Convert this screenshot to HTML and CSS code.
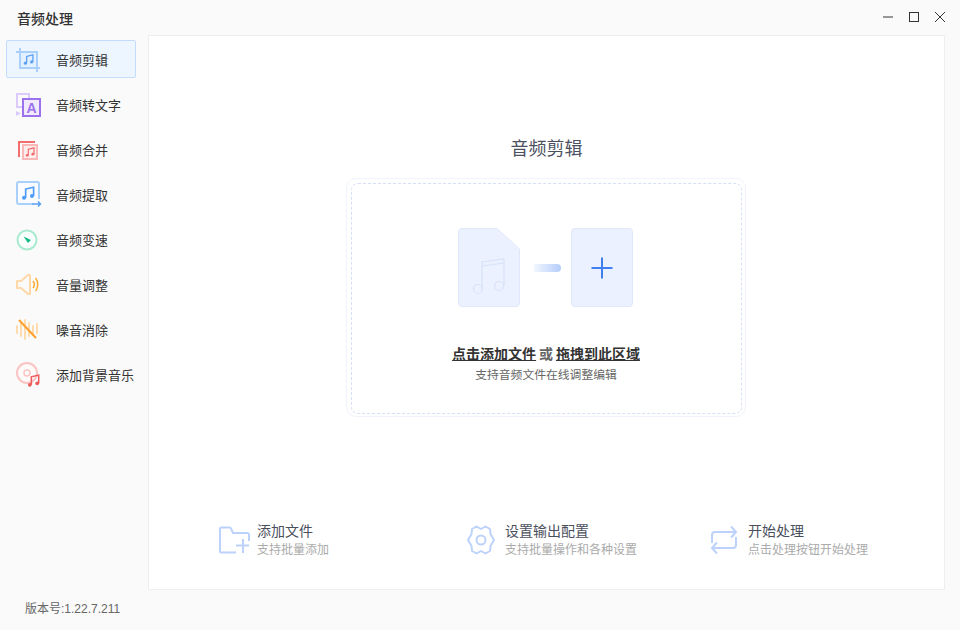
FILE: index.html
```html
<!DOCTYPE html>
<html>
<head>
    <title>音频处理</title>
    <link rel="stylesheet" href="styles.css">
</head>
<body>
    <svg class="defs" width="0" height="0">
        <symbol id="note" viewBox="0 0 12 12">
            <path d="M4 10V2.600L10.800 1v7.600" fill="none" stroke="currentColor" stroke-width="1.400"/>
            <circle cx="2.600" cy="10" r="1.700" fill="currentColor"/>
            <circle cx="9.400" cy="8.600" r="1.700" fill="currentColor"/>
        </symbol>
    </svg>

    <div class="titlebar">
        <span class="app-title">音频处理</span>
        <div class="win-buttons">
            <svg width="12" height="12" viewBox="0 0 12 12"><path d="M1 6h10" stroke="#333" fill="none"/></svg>
            <svg width="12" height="12" viewBox="0 0 12 12"><rect x="1.500" y="1.500" width="9" height="9" stroke="#333" fill="none"/></svg>
            <svg width="12" height="12" viewBox="0 0 12 12"><path d="M1 1l10 10M11 1L1 11" stroke="#333" fill="none"/></svg>
        </div>
    </div>

    <div class="main">
        <div class="sidebar">
            <div class="nav-item active">
                <svg class="nav-icon" viewBox="0 0 28 28">
                    <rect x="6" y="7" width="17" height="16" fill="#e3f0ff"/>
                    <path d="M6 3v20h20M2 7h21v20" fill="none" stroke="#a9d0fb" stroke-width="2"/>
                    <use href="#note" x="9" y="9" width="11" height="11" color="#5aa0f5"/>
                </svg>
                <span>音频剪辑</span>
            </div>
            <div class="nav-item">
                <svg class="nav-icon" viewBox="0 0 28 28">
                    <path d="M8 17H3V4h12v4" fill="none" stroke="#dccbfa" stroke-width="2"/>
                    <path d="M2 21l5 2.500L2 26z" fill="#dccbfa"/>
                    <rect x="9" y="9" width="17" height="17" fill="#f1eafe" stroke="#9b72ec" stroke-width="2"/>
                    <text x="17.500" y="23" class="icon-letter">A</text>
                </svg>
                <span>音频转文字</span>
            </div>
            <div class="nav-item">
                <svg class="nav-icon" viewBox="0 0 28 28">
                    <path d="M5 22V7h16" fill="none" stroke="#f26d6d" stroke-width="2"/>
                    <rect x="9" y="10" width="14" height="14" fill="#ffecec" stroke="#fbb8b8" stroke-width="2"/>
                    <use href="#note" x="11" y="12" width="10" height="10" color="#f06a6a"/>
                </svg>
                <span>音频合并</span>
            </div>
            <div class="nav-item">
                <svg class="nav-icon" viewBox="0 0 28 28">
                    <path d="M19 24H5a2 2 0 0 1-2-2V4a2 2 0 0 1 2-2h18a2 2 0 0 1 2 2v15" fill="#fafcff" stroke="#a9d0fb" stroke-width="2"/>
                    <use href="#note" x="7" y="6" width="14" height="14" color="#4d9bf7"/>
                    <path d="M18 24h8M24 21.500l2.500 2.500-2.500 2.500" fill="none" stroke="#5aa0f5" stroke-width="1.500"/>
                </svg>
                <span>音频提取</span>
            </div>
            <div class="nav-item">
                <svg class="nav-icon" viewBox="0 0 28 28">
                    <circle cx="13" cy="15" r="9.500" fill="#fbfffd" stroke="#a8ead0" stroke-width="2"/>
                    <path d="M9.500 11.500l7.500 3.500-3 3z" fill="#12b886"/>
                </svg>
                <span>音频变速</span>
            </div>
            <div class="nav-item">
                <svg class="nav-icon" viewBox="0 0 28 28">
                    <path d="M3 11h4l7-6h2v19h-2l-7-6H3z" fill="none" stroke="#ffd8a8" stroke-width="2" stroke-linejoin="round"/>
                    <path d="M19 11c1.500 2 1.500 5 0 7M21.500 8c3 3.500 3 9.500 0 13" fill="none" stroke="#ffaa33" stroke-width="1.500"/>
                </svg>
                <span>音量调整</span>
            </div>
            <div class="nav-item">
                <svg class="nav-icon" viewBox="0 0 28 28">
                    <path d="M3 11v7M7 8v13M11 5v19M15 8v13M19 11v9M23 9v9" fill="none" stroke="#ffdcae" stroke-width="2" stroke-linecap="round"/>
                    <path d="M5 5l17 18" fill="none" stroke="#ff9f2e" stroke-width="2"/>
                </svg>
                <span>噪音消除</span>
            </div>
            <div class="nav-item">
                <svg class="nav-icon" viewBox="0 0 28 28">
                    <circle cx="13" cy="13" r="10" fill="#fffafa" stroke="#f9c4c4" stroke-width="2"/>
                    <circle cx="13" cy="13" r="3" fill="none" stroke="#f9c4c4" stroke-width="1.500"/>
                    <use href="#note" x="13" y="14" width="13" height="13" color="#ee5a5a"/>
                </svg>
                <span>添加背景音乐</span>
            </div>
        </div>

        <div class="panel">
            <h2 class="panel-title">音频剪辑</h2>
            <div class="drop-outer">
                <div class="drop-inner">
                    <div class="drop-icons">
                        <svg class="file-icon" width="62" height="79" viewBox="0 0 62 79">
                            <path d="M4 .5h35L61.500 21v54a3.500 3.500 0 0 1-3.500 3.500H4A3.500 3.500 0 0 1 .5 75V4A3.500 3.500 0 0 1 4 .5z" fill="#ebf1fe" stroke="#dfe8fb"/>
                            <path d="M24 61V34l22-3v27M24 38l22-3" fill="none" stroke="#d7e2f8" stroke-width="1.200"/>
                            <circle cx="20" cy="61" r="4.500" fill="none" stroke="#d7e2f8" stroke-width="1.200"/>
                            <circle cx="41" cy="58" r="4.500" fill="none" stroke="#d7e2f8" stroke-width="1.200"/>
                        </svg>
                        <span class="dash"></span>
                        <div class="plus-box">
                            <svg width="22" height="22" viewBox="0 0 22 22"><path d="M11 .5v21M.5 11h21" stroke="#3f7ff0" stroke-width="2" fill="none"/></svg>
                        </div>
                    </div>
                    <p class="drop-main"><u>点击添加文件</u> <span class="or">或</span> <u>拖拽到此区域</u></p>
                    <p class="drop-sub">支持音频文件在线调整编辑</p>
                </div>
            </div>
            <div class="steps">
                <div class="step">
                    <svg class="step-icon" width="32" height="30" viewBox="0 0 32 30">
                        <path d="M31 16V9.500A1.500 1.500 0 0 0 29.500 8H15L13 3.500A1.500 1.500 0 0 0 11.500 2.500H3.500A1.500 1.500 0 0 0 2 4v22A1.500 1.500 0 0 0 3.500 27.500H18M25 14v14M18 20.500h13" fill="none" stroke="#bdd2fb" stroke-width="2"/>
                    </svg>
                    <div>
                        <div class="step-title">添加文件</div>
                        <div class="step-sub">支持批量添加</div>
                    </div>
                </div>
                <div class="step">
                    <svg class="step-icon" width="28" height="30" viewBox="0 0 28 30">
                        <path d="M14 4L18.500 1.500L23 4L23.500 9L27 15L23.500 21L23 26L18.500 28.500L14 26L9.500 28.500L5 26L4.500 21L1 15L4.500 9L5 4L9.500 1.500Z" fill="none" stroke="#bdd2fb" stroke-width="2" stroke-linejoin="round"/>
                        <circle cx="14" cy="15" r="4.500" fill="none" stroke="#bdd2fb" stroke-width="2"/>
                    </svg>
                    <div>
                        <div class="step-title">设置输出配置</div>
                        <div class="step-sub">支持批量操作和各种设置</div>
                    </div>
                </div>
                <div class="step">
                    <svg class="step-icon" width="28" height="30" viewBox="0 0 28 30">
                        <path d="M2 18V10a3 3 0 0 1 3-3h21M21 1.500l5 5.500-5 5.500M26 12v8a3 3 0 0 1-3 3H2M7 17.500L2 23l5 5.500" fill="none" stroke="#bdd2fb" stroke-width="2"/>
                    </svg>
                    <div>
                        <div class="step-title">开始处理</div>
                        <div class="step-sub">点击处理按钮开始处理</div>
                    </div>
                </div>
            </div>
        </div>
    </div>

    <div class="footer">版本号:1.22.7.211</div>
</body>
</html>
```

FILE: styles.css
```css
html, body {
    margin: 0;
    height: 100%;
}
body {
    width: 960px;
    height: 630px;
    overflow: hidden;
    display: flex;
    flex-direction: column;
    background-color: #fafafa;
    color: #333;
    font-family: "Liberation Sans", "Noto Sans CJK SC", sans-serif;
}
.defs {
    position: absolute;
}
.titlebar {
    height: 35px;
    flex: none;
    display: flex;
    align-items: center;
    justify-content: space-between;
    padding: 0 14px 0 17px;
}
.app-title {
    font-size: 14px;
    font-weight: 500;
}
.win-buttons {
    display: flex;
    gap: 14px;
    padding-bottom: 1px;
}
.main {
    flex: 1;
    display: flex;
    min-height: 0;
}
.sidebar {
    width: 148px;
    flex: none;
    padding-top: 5px;
    box-sizing: border-box;
}
.nav-item {
    width: 130px;
    height: 38px;
    margin: 0 0 7px 6px;
    box-sizing: border-box;
    display: flex;
    align-items: center;
    gap: 14px;
    padding-left: 7px;
    font-size: 13px;
    white-space: nowrap;
    border: 1px solid transparent;
}
.nav-item.active {
    background-color: #edf5ff;
    border: 1px solid #c3dcfb;
    border-radius: 2px;
}
.nav-icon {
    width: 28px;
    height: 28px;
    flex: none;
    overflow: visible;
}
.icon-letter {
    font-size: 14px;
    font-weight: 700;
    fill: #9b72ec;
    text-anchor: middle;
}
.panel {
    width: 797px;
    flex: none;
    box-sizing: border-box;
    background-color: #fff;
    border: 1px solid #eee;
    display: flex;
    flex-direction: column;
    align-items: center;
}
.panel-title {
    margin: 100px 0 16px;
    font-size: 18px;
    line-height: 26px;
    font-weight: 400;
    color: #4c5060;
}
.drop-outer {
    width: 400px;
    height: 239px;
    margin-right: 2px;
    box-sizing: border-box;
    border: 1px solid #f0f3fa;
    border-radius: 10px;
    padding: 4px 3px 2px 4px;
}
.drop-inner {
    height: 100%;
    box-sizing: border-box;
    border: 1px dashed #d5e0f6;
    border-radius: 7px;
    padding-top: 44px;
    text-align: center;
}
.drop-icons {
    display: flex;
    justify-content: center;
    align-items: center;
    height: 79px;
    margin-right: 1px;
}
.dash {
    width: 27px;
    height: 8px;
    margin: 0 10px 0 14px;
    border-radius: 0 4px 4px 0;
    background: linear-gradient(to right, #f2f6ff, #b5cdfa);
}
.plus-box {
    width: 62px;
    height: 79px;
    box-sizing: border-box;
    background-color: #ebf1fe;
    border: 1px solid #dfe8fb;
    border-radius: 4px;
    display: flex;
    align-items: center;
    justify-content: center;
}
.drop-main {
    margin: 37px 0 0;
    font-size: 14px;
    line-height: 20px;
    font-weight: 700;
    color: #333;
    white-space: nowrap;
    word-spacing: -1px;
}
.or {
    color: #666;
}
.drop-sub {
    margin: 1px 0 0;
    font-size: 11.800px;
    line-height: 20px;
    color: #666;
}
.steps {
    align-self: stretch;
    display: grid;
    grid-template-columns: 249px 243px auto;
    padding-left: 69px;
    margin-top: 104px;
}
.step {
    display: flex;
    align-items: center;
}
.step:nth-child(1) .step-icon {
    margin-right: 7px;
}
.step:nth-child(2) .step-icon,
.step:nth-child(3) .step-icon {
    margin-right: 10px;
}
.step-title {
    font-size: 14px;
    line-height: 20px;
    color: #4a4f5c;
}
.step-sub {
    margin-top: 1px;
    font-size: 12px;
    line-height: 16px;
    color: #aaa;
}
.footer {
    height: 40px;
    flex: none;
    padding-left: 25px;
    font-size: 12px;
    line-height: 39px;
    color: #666;
}
```
